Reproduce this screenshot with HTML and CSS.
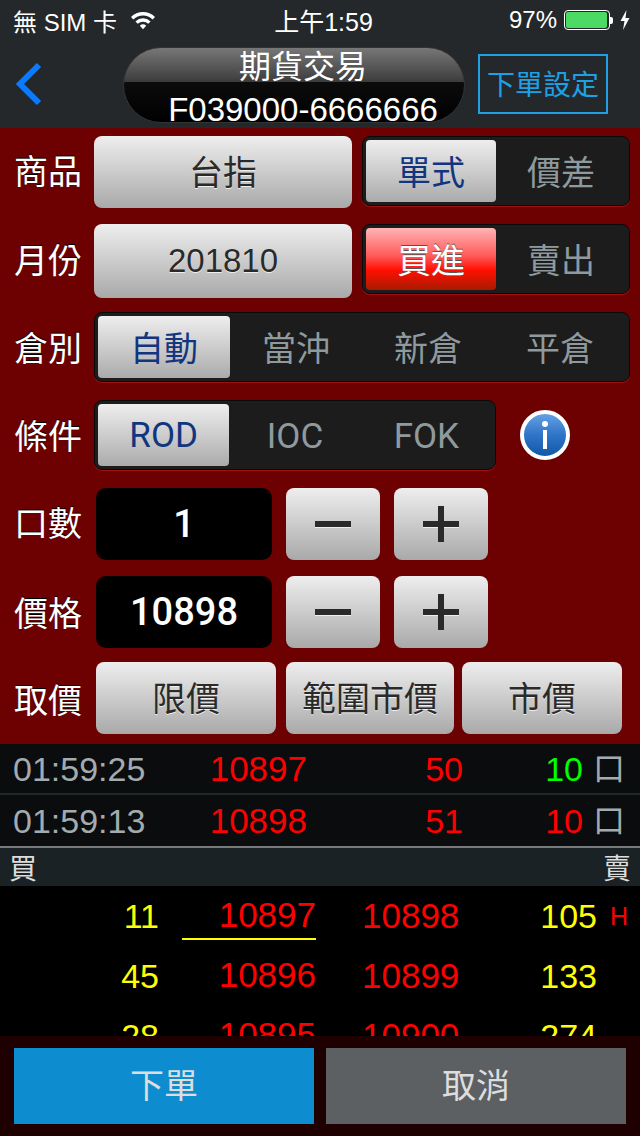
FILE: index.html
```html
<!DOCTYPE html>
<html lang="zh-Hant">
<head>
    <meta charset="UTF-8">
    <meta name="viewport" content="width=device-width, initial-scale=1.0">
    <title>期貨交易</title>
    <link rel="stylesheet" href="styles.css">
</head>
<body>
<div class="app">

    <div class="status-bar">
        <div class="status-left">
            <span>無 SIM 卡</span>
            <svg class="wifi" width="26" height="20" viewBox="0 0 26 20">
                <path d="M1 7 A17 17 0 0 1 25 7 L22.6 9.5 A13.6 13.6 0 0 0 3.4 9.5 Z" fill="#fff"/>
                <path d="M5.4 11.4 A11 11 0 0 1 20.6 11.4 L18.2 13.8 A7.6 7.6 0 0 0 7.8 13.8 Z" fill="#fff"/>
                <path d="M9.8 15.8 A4.8 4.8 0 0 1 16.2 15.8 L13 19.2 Z" fill="#fff"/>
            </svg>
        </div>
        <div class="status-time">上午1:59</div>
        <div class="status-right">
            <span>97%</span>
            <div class="battery"><div class="battery-fill"></div></div>
            <div class="battery-tip"></div>
            <svg class="bolt" width="10" height="20" viewBox="0 0 10 20">
                <path d="M6.5 0 L0.5 11 H4.5 L3 20 L9.5 8 H5.5 Z" fill="#fff"/>
            </svg>
        </div>
    </div>

    <div class="nav-bar">
        <svg class="back" width="28" height="44" viewBox="0 0 28 44">
            <path d="M24 3 L5 22 L24 41" fill="none" stroke="#0a7aff" stroke-width="6"/>
        </svg>
        <div class="nav-pill">
            <div class="nav-title">期貨交易</div>
            <div class="nav-account">F039000-6666666</div>
        </div>
        <div class="nav-setting">下單設定</div>
    </div>

    <div class="form">
        <div class="row row-1">
            <div class="label">商品</div>
            <div class="btn btn-wide">台指</div>
            <div class="seg seg-half">
                <div class="seg-item active">單式</div>
                <div class="seg-item">價差</div>
            </div>
        </div>
        <div class="row row-2">
            <div class="label">月份</div>
            <div class="btn btn-wide btn-num">201810</div>
            <div class="seg seg-half">
                <div class="seg-item active-red">買進</div>
                <div class="seg-item">賣出</div>
            </div>
        </div>
        <div class="row row-3">
            <div class="label">倉別</div>
            <div class="seg seg-full">
                <div class="seg-item active">自動</div>
                <div class="seg-item">當沖</div>
                <div class="seg-item">新倉</div>
                <div class="seg-item">平倉</div>
            </div>
        </div>
        <div class="row row-3">
            <div class="label">條件</div>
            <div class="seg seg-cond">
                <div class="seg-item active">ROD</div>
                <div class="seg-item">IOC</div>
                <div class="seg-item">FOK</div>
            </div>
            <svg class="info" width="52" height="52" viewBox="0 0 52 52">
                <defs>
                    <linearGradient id="infoFill" x1="0" y1="0" x2="0" y2="1">
                        <stop offset="0" stop-color="#6aa5e6"/>
                        <stop offset="0.5" stop-color="#2f74c8"/>
                        <stop offset="1" stop-color="#0f56a4"/>
                    </linearGradient>
                </defs>
                <circle cx="26" cy="26" r="23" fill="url(#infoFill)" stroke="#fff" stroke-width="4"/>
                <circle cx="26" cy="15" r="3" fill="#fff"/>
                <rect x="24" y="21" width="4" height="19" fill="#fff"/>
            </svg>
        </div>
        <div class="row">
            <div class="label">口數</div>
            <div class="field">1</div>
            <div class="btn btn-step">
                <div class="minus"></div>
            </div>
            <div class="btn btn-step">
                <div class="plus"></div>
            </div>
        </div>
        <div class="row row-6">
            <div class="label">價格</div>
            <div class="field">10898</div>
            <div class="btn btn-step">
                <div class="minus"></div>
            </div>
            <div class="btn btn-step">
                <div class="plus"></div>
            </div>
        </div>
        <div class="row row-7">
            <div class="label">取價</div>
            <div class="btn btn-limit">限價</div>
            <div class="btn btn-range">範圍市價</div>
            <div class="btn btn-market">市價</div>
        </div>
    </div>

    <div class="tick">
        <div class="tick-time">01:59:25</div>
        <div class="tick-price">10897</div>
        <div class="tick-vol">50</div>
        <div class="tick-qty green">10</div>
        <div class="tick-unit">口</div>
    </div>
    <div class="tick tick-last">
        <div class="tick-time">01:59:13</div>
        <div class="tick-price">10898</div>
        <div class="tick-vol">51</div>
        <div class="tick-qty">10</div>
        <div class="tick-unit">口</div>
    </div>

    <div class="book-head">
        <span>買</span>
        <span>賣</span>
    </div>

    <div class="book">
        <div class="book-row">
            <div class="bid-qty">11</div>
            <div class="bid-price first">10897</div>
            <div class="ask-price">10898</div>
            <div class="ask-qty">105</div>
            <div class="high">H</div>
        </div>
        <div class="book-row">
            <div class="bid-qty">45</div>
            <div class="bid-price">10896</div>
            <div class="ask-price">10899</div>
            <div class="ask-qty">133</div>
        </div>
        <div class="book-row">
            <div class="bid-qty">28</div>
            <div class="bid-price">10895</div>
            <div class="ask-price">10900</div>
            <div class="ask-qty">274</div>
        </div>
    </div>

    <div class="footer">
        <div class="footer-btn submit">下單</div>
        <div class="footer-btn cancel">取消</div>
    </div>

</div>
</body>
</html>
```

FILE: styles.css
```css
html, body {
    margin: 0;
    padding: 0;
    background: #000;
}

.app {
    width: 640px;
    height: 1136px;
    overflow: hidden;
    display: flex;
    flex-direction: column;
    font-family: "Liberation Sans", "Noto Sans CJK TC", sans-serif;
    font-size: 34px;
}

/* status bar */
.status-bar {
    height: 40px;
    background: #24282a;
    color: #fff;
    font-size: 24px;
    display: flex;
    align-items: center;
    justify-content: space-between;
    padding: 0 10px 0 13px;
}

.status-left {
    width: 210px;
    display: flex;
    align-items: center;
    gap: 13px;
}

.status-time {
    margin-left: 4px;
    font-size: 25px;
}

.status-right {
    width: 210px;
    display: flex;
    align-items: center;
    justify-content: flex-end;
}

.status-right span {
    margin-right: 7px;
}

.battery {
    width: 46px;
    height: 20px;
    box-sizing: border-box;
    border: 1px solid #fff;
    border-radius: 4px;
    padding: 1px;
}

.battery-fill {
    width: 41px;
    height: 16px;
    background: #4cd964;
    border-radius: 2px;
}

.battery-tip {
    width: 3px;
    height: 7px;
    background: #fff;
    border-radius: 0 2px 2px 0;
    margin-right: 7px;
}

/* nav */
.nav-bar {
    height: 88px;
    background: #24282a;
    display: flex;
    align-items: center;
}

.back {
    margin-left: 15px;
    margin-right: 80px;
}

.nav-pill {
    width: 342px;
    height: 76px;
    box-sizing: border-box;
    margin-top: 2px;
    padding-left: 18px;
    border-radius: 38px;
    overflow: hidden;
    border: 1px solid #333;
    background: linear-gradient(#777 0%, #3c3c3c 46%, #0c0c0c 46%, #000 100%);
    color: #fff;
    text-align: center;
    white-space: nowrap;
}

.nav-title {
    font-size: 32px;
    line-height: 38px;
}

.nav-account {
    font-size: 33px;
    line-height: 36px;
    margin-top: 6px;
}

.nav-setting {
    width: 130px;
    height: 60px;
    box-sizing: border-box;
    margin-left: 13px;
    border: 2px solid #1fa0e6;
    color: #1fa0e6;
    font-size: 28px;
    line-height: 60px;
    text-align: center;
}

/* order form */
.form {
    height: 616px;
    box-sizing: border-box;
    padding-top: 8px;
    background: #6d0000;
}

.row {
    height: 72px;
    margin-bottom: 16px;
    padding-left: 14px;
    display: flex;
    align-items: flex-start;
}

.row-2 {
    height: 74px;
    margin-bottom: 14px;
}

.row-3 {
    height: 70px;
    margin-bottom: 18px;
}

.row-6 {
    margin-bottom: 14px;
}

.row-7 {
    margin-bottom: 0;
}

.label {
    width: 70px;
    flex: none;
    align-self: center;
    color: #fff;
    line-height: 44px;
    text-shadow: 0 -1px 0 #000;
}

.row-3 .label,
.row-6 .label {
    padding-top: 4px;
}

.row-7 .label {
    padding-top: 6px;
}

.btn {
    box-sizing: border-box;
    height: 100%;
    padding-bottom: 3px;
    display: flex;
    align-items: center;
    justify-content: center;
    border-radius: 8px;
    background: linear-gradient(#eeeeee, #a9a9a9);
    color: #2a2a2a;
    text-shadow: 0 1px 0 #eee;
}

.btn-wide {
    width: 258px;
    margin-left: 10px;
}

.btn-num {
    padding-bottom: 0;
    font-size: 33px;
}

.btn-step {
    width: 94px;
    margin-left: 14px;
    padding-bottom: 0;
}

.btn-limit {
    width: 180px;
    margin-left: 12px;
}

.btn-range {
    width: 168px;
    margin-left: 10px;
}

.btn-market {
    width: 160px;
    margin-left: 8px;
}

.minus {
    width: 36px;
    height: 6px;
    background: #2a2a2a;
    box-shadow: 0 1px 0 #eee;
}

.plus {
    width: 36px;
    height: 6px;
    background: #2a2a2a;
    position: relative;
    box-shadow: 0 1px 0 #eee;
}

.plus::after {
    content: "";
    position: absolute;
    left: 15px;
    top: -15px;
    width: 6px;
    height: 36px;
    background: #2a2a2a;
}

/* segmented controls */
.seg {
    box-sizing: border-box;
    height: 70px;
    padding: 3px;
    display: flex;
    background: #1c1c1c;
    border: 1px solid #0a0a0a;
    border-radius: 8px;
    box-shadow: 0 1px 0 #a01010;
}

.seg-half {
    width: 268px;
    margin-left: 10px;
}

.seg-full {
    width: 536px;
    margin-left: 10px;
}

.seg-cond {
    width: 402px;
    margin-left: 10px;
    font-family: Roboto, "Liberation Sans", sans-serif;
    font-size: 35px;
}

.seg-item {
    flex: 1;
    display: flex;
    align-items: center;
    justify-content: center;
    padding-bottom: 2px;
    border-radius: 4px;
    color: #8f9a9e;
}

.seg-cond .seg-item {
    padding-bottom: 0;
    padding-top: 2px;
}

.seg-cond .seg-item.active {
    padding-top: 0;
}

.seg-item.active {
    background: linear-gradient(#eeeeee, #ababab);
    color: #12357f;
}

.seg-item.active-red {
    background: linear-gradient(#ffb4b4 0%, #ff5a5a 45%, #ff1000 68%, #a81a00 100%);
    color: #fff;
    text-shadow: 0 -1px 0 #555;
}

.info {
    margin: 9px 0 0 23px;
}

.field {
    width: 176px;
    height: 100%;
    margin-left: 12px;
    border-radius: 10px;
    background: #000;
    color: #fff;
    font-family: Roboto, "Liberation Sans", sans-serif;
    font-size: 38px;
    font-weight: 500;
    line-height: 72px;
    text-align: center;
}

/* latest fills */
.tick {
    height: 51px;
    box-sizing: border-box;
    display: flex;
    align-items: center;
    background: #0a0c0e;
    border-bottom: 2px solid #1f2729;
    line-height: 48px;
    color: #f00;
}

.tick-last {
    height: 53px;
    border-bottom: 2px solid #77797a;
}

.tick-time {
    width: 193px;
    padding-left: 13px;
    box-sizing: border-box;
    color: #a3abae;
}

.tick-price {
    width: 114px;
    font-size: 35px;
    text-align: right;
}

.tick-vol {
    width: 156px;
    text-align: right;
}

.tick-qty {
    width: 120px;
    text-align: right;
}

.tick-qty.green {
    color: #00ff00;
}

.tick-unit {
    margin-left: 10px;
    color: #a3abae;
    font-size: 32px;
}

.book-head {
    height: 38px;
    padding: 0 9px;
    display: flex;
    justify-content: space-between;
    align-items: center;
    background: #1b2225;
    color: #ddd;
    font-size: 28px;
}

.book {
    height: 150px;
    overflow: hidden;
    background: #000;
}

.book-row {
    height: 60px;
    display: flex;
    align-items: center;
    color: #f00;
}

.bid-qty {
    width: 159px;
    text-align: right;
    color: #ff0;
}

.bid-price {
    width: 134px;
    margin-left: 23px;
    font-size: 35px;
    line-height: 46px;
    text-align: right;
    border-bottom: 2px solid transparent;
}

.bid-price.first {
    border-bottom-color: #ff0;
}

.ask-price {
    width: 100px;
    margin-left: 46px;
    font-size: 35px;
}

.ask-qty {
    width: 135px;
    text-align: right;
    color: #ff0;
}

.high {
    margin-left: 13px;
    font-size: 25px;
}

.footer {
    height: 100px;
    box-sizing: border-box;
    padding: 12px 14px;
    display: flex;
    gap: 12px;
    background: #1f0000;
}

.footer-btn {
    width: 300px;
    height: 76px;
    line-height: 76px;
    text-align: center;
    color: #ddd;
}

.submit {
    background: #0d8ccf;
}

.cancel {
    background: #5c6063;
}
```
